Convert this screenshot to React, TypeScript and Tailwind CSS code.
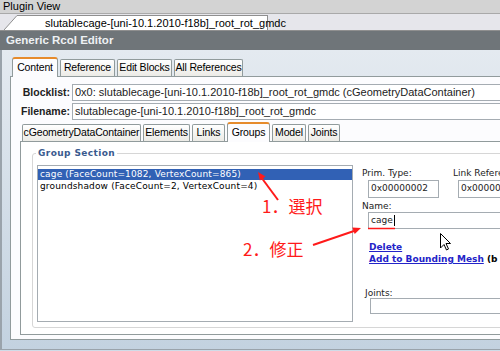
import React from 'react';

const sans = "font-['Liberation_Sans',Arial,sans-serif]";
const verd = "font-['DejaVu_Sans',Verdana,sans-serif]";

const Tab = ({ label, w, selected }: { label: string; w: number; selected?: boolean }) => (
  <div
    style={{ width: w }}
    className={
      selected
        ? 'shrink-0 whitespace-nowrap h-[20px] -mb-px flex items-center justify-center border border-b-0 border-[#919b9c] border-t-2 border-t-[#e68b2c] rounded-t-[3px] bg-[#fcfcfe] text-[10.5px] tracking-[-0.15px] text-black relative z-10'
        : 'shrink-0 whitespace-nowrap h-[17px] flex items-center justify-center border border-b-0 border-[#919b9c] rounded-t-[2px] bg-linear-to-b from-[#ffffff] to-[#ecebe6] text-[10.5px] tracking-[-0.15px] text-black'
    }
  >
    {label}
  </div>
);

const Input = ({ text, className }: { text?: string; className: string }) => (
  <div className={`shrink-0 border border-[#a5acb2] bg-white flex items-center pl-[2px] whitespace-nowrap overflow-hidden ${className}`}>
    {text}
  </div>
);

export default function App() {
  return (
    <div className={`w-[500px] h-[351px] overflow-hidden relative bg-[#d0dce8] ${sans}`}>
      {/* window title */}
      <div className="h-[14px] bg-[#d3d3d3] border-b border-[#a9a9a9] pl-[3px] text-[11px] leading-[13px] text-black">
        Plugin View
      </div>

      {/* document tab strip */}
      <div className="h-[17px] bg-[#e6e6eb] border-b border-[#8f8f8f] flex items-end">
        <svg width="18" height="15" className="shrink-0 ml-[4px]">
          <polygon points="0,15 13,0.5 18,0.5 18,15" fill="#ffffff" />
          <line x1="0" y1="15" x2="13" y2="0.5" stroke="#8f8f8f" strokeWidth="1" />
          <line x1="13" y1="0.5" x2="18" y2="0.5" stroke="#8f8f8f" strokeWidth="1" />
        </svg>
        <div className="h-[15px] w-[246px] bg-white border-t border-r border-[#8f8f8f] pl-[23px] text-[11px] leading-[14px] text-black whitespace-nowrap">
          slutablecage-[uni-10.1.2010-f18b]_root_rot_gmdc
        </div>
      </div>

      {/* editor header */}
      <div className="h-[19px] bg-[#6f7579] pl-[6px] text-[11.5px] font-bold leading-[19px] text-[#eef1f4]">
        Generic Rcol Editor
      </div>

      {/* editor body */}
      <div className="h-[300px] border-b border-l-2 border-[#9aa3ab] bg-linear-to-b from-[#e4eaf0] to-[#c3d2e0] pl-[8px] pt-[7px]">
        <div className="h-[19px] flex items-end gap-[2px] pl-[2px]">
          <Tab label="Content" w={46} selected />
          <Tab label="Reference" w={55} />
          <Tab label="Edit Blocks" w={55} />
          <Tab label="All References" w={69} />
        </div>

        <div className="w-[520px] h-[264px] border border-[#919b9c] bg-[#fcfcfe] pt-[7px]">
          <div className="flex items-center h-[17px]">
            <div className="w-[59px] shrink-0 text-right text-[10.5px] font-bold text-[#222]">Blocklist:</div>
            <Input
              className="ml-[2px] h-[17px] w-[440px] text-[11px] text-[#222]"
              text="0x0: slutablecage-[uni-10.1.2010-f18b]_root_rot_gmdc (cGeometryDataContainer)"
            />
          </div>
          <div className="flex items-center h-[17px] mt-[2px]">
            <div className="w-[59px] shrink-0 text-right text-[10.5px] font-bold text-[#222]">Filename:</div>
            <Input
              className="ml-[2px] h-[17px] w-[440px] text-[11px] text-[#222]"
              text="slutablecage-[uni-10.1.2010-f18b]_root_rot_gmdc"
            />
          </div>

          <div className="ml-[9px] mt-[3px] h-[18px] flex items-end gap-[2px] pl-[2px]">
            <Tab label="cGeometryDataContainer" w={119} />
            <Tab label="Elements" w={47} />
            <Tab label="Links" w={33} />
            <Tab label="Groups" w={43} selected />
            <Tab label="Model" w={34} />
            <Tab label="Joints" w={32} />
          </div>

          <div className="ml-[9px] w-[500px] h-[194px] border border-[#919b9c] bg-white pt-[11px] pl-[11px]">
            <div className={`relative w-[480px] h-[175px] border border-[#d6d6d6] rounded-[3px] pt-[11px] pl-[4px] ${verd}`}>
              <span className="absolute -top-[7px] left-[3px] bg-white px-[2px] text-[9px] font-bold leading-[12px] text-[#3a5a8e] tracking-[0.4px]">
                Group Section
              </span>
              <div className="flex">
                <div className="shrink-0 w-[316px] h-[157px] border border-[#a5acb2] bg-white pt-[3px] text-[9px] tracking-[0.15px]">
                  <div className="h-[11px] leading-[11px] bg-[#3161b5] text-white pl-[2px]">
                    cage (FaceCount=1082, VertexCount=865)
                  </div>
                  <div className="h-[11px] leading-[11px] text-black pl-[2px] mt-[1px]">
                    groundshadow (FaceCount=2, VertexCount=4)
                  </div>
                </div>

                <div className="shrink-0 ml-[9px] w-[160px] flex flex-col text-[9px] text-[#222]">
                  <div className="flex mt-[3px]">
                    <div className="w-[91px] shrink-0">
                      <div className="h-[12px] leading-[11px]">Prim. Type:</div>
                      <Input className="ml-[6px] w-[71px] h-[18px] text-[9px]" text="0x00000002" />
                    </div>
                    <div className="shrink-0">
                      <div className="h-[12px] leading-[11px] whitespace-nowrap">Link Reference:</div>
                      <Input className="ml-[5px] w-[71px] h-[18px] text-[9px]" text="0x00000000" />
                    </div>
                  </div>
                  <div className="mt-[3px] h-[11px] leading-[11px]">Name:</div>
                  <div className="shrink-0 ml-[6px] w-[160px] h-[17px] border border-[#a5acb2] bg-white flex items-center pl-[2px]">
                    cage<span className="w-px h-[11px] bg-black ml-[1px]" />
                  </div>
                  <div className="mt-[12px] ml-[7px] h-[12px] leading-[12px] font-bold text-[#2323c8] underline">
                    Delete
                  </div>
                  <div className="ml-[7px] h-[12px] leading-[12px] font-bold whitespace-nowrap">
                    <span className="text-[#2323c8] underline">Add to Bounding Mesh</span>
                    <span className="text-black"> (b</span>
                  </div>
                  <div className="mt-[23px] ml-[3px] h-[10px] leading-[10px]">Joints:</div>
                  <div className="shrink-0 ml-[8px] w-[160px] h-[16px] border border-[#a5acb2] bg-white" />
                </div>
              </div>
            </div>
          </div>
        </div>
      </div>

      {/* red annotations */}
      <svg className="absolute inset-0 pointer-events-none" width="500" height="351">
        <line x1="278" y1="200" x2="261" y2="177" stroke="#ff1a1a" strokeWidth="2" />
        <polygon points="258,172 265.5,176.5 259.9,180.5" fill="#ff1a1a" />
        <line x1="313" y1="245" x2="354" y2="231" stroke="#ff1a1a" strokeWidth="2" />
        <polygon points="361,228 354.7,234 352.3,227.4" fill="#ff1a1a" />
        <line x1="368" y1="228.5" x2="395" y2="228.5" stroke="#ff1a1a" strokeWidth="1.5" />
        <path
          d="M440.5 233.5 L440.5 248 L444 244.5 L446.5 250 L448.5 249 L446 243.5 L450.5 243.5 Z"
          fill="#ffffff"
          stroke="#000000"
          strokeWidth="1"
          strokeLinejoin="round"
        />
      </svg>
      <div className="absolute left-[262px] top-[196px] text-[17px] leading-[20px] text-[#ff1a1a] font-['Noto_Sans_CJK_JP',sans-serif] whitespace-nowrap">
        1．選択
      </div>
      <div className="absolute left-[243px] top-[239px] text-[17px] leading-[20px] text-[#ff1a1a] font-['Noto_Sans_CJK_JP',sans-serif] whitespace-nowrap">
        2．修正
      </div>
    </div>
  );
}
